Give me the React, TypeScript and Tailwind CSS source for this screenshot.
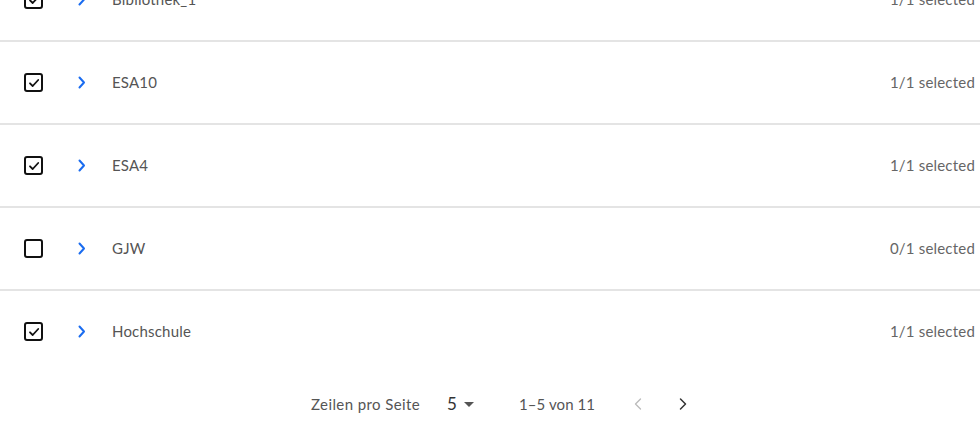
import { ChevronLeft, ChevronRight } from 'lucide-react';

const rows = [
    { name: "Bibliothek_1", checked: true, count: "1/1" },
    { name: "ESA10", checked: true, count: "1/1" },
    { name: "ESA4", checked: true, count: "1/1" },
    { name: "GJW", checked: false, count: "0/1" },
    { name: "Hochschule", checked: true, count: "1/1" },
];

function Checkbox({ checked }: { checked: boolean }) {
    return (
        <span className="w-[19px] h-[19px] border-2 border-[#111] rounded-[3px] flex items-center justify-center">
            {checked && (
                <svg width="12" height="12" viewBox="0 0 12 12" fill="none">
                    <path d="M2 6.3 L4.7 9 L10.2 3" stroke="#111" strokeWidth="1.8" strokeLinecap="round" strokeLinejoin="round" />
                </svg>
            )}
        </span>
    );
}

export default function App() {
    return (
        <div className="w-[980px] h-[428px] bg-white overflow-hidden font-['Lato',sans-serif]">
            <div className="-mt-[41px]">
                {rows.map((row, idx) => (
                    <div key={row.name}>
                        {idx > 0 && <div className="h-[2px] bg-[#e4e4e4]" />}
                        <div className="h-[81px] flex items-center pl-[24px] pr-[5px]">
                            <Checkbox checked={row.checked} />
                            <svg className="ml-[35px]" width="8" height="13" viewBox="0 0 8 13" fill="none">
                                <path d="M1.5 1.5 L6 6.5 L1.5 11.5" stroke="#1a6cf0" strokeWidth="2" strokeLinecap="round" strokeLinejoin="round" />
                            </svg>
                            <span className="ml-[26px] text-[15px] text-[#555] tracking-[0.2px]">{row.name}</span>
                            <span className="ml-auto text-[15px] text-[#666] tracking-[0.2px]">{row.count} selected</span>
                        </div>
                    </div>
                ))}
            </div>
            <div className="flex items-center h-[64px] pl-[311px] text-[15px] text-[#555]">
                <span className="tracking-[0.4px]">Zeilen pro Seite</span>
                <span className="ml-[27px] text-[17px] text-[#333]">5</span>
                <svg className="ml-[7px]" width="10" height="5" viewBox="0 0 10 5">
                    <path d="M0 0 L10 0 L5 5 Z" fill="#555" />
                </svg>
                <span className="ml-[45px] tracking-[0.1px]">1–5 von 11</span>
                <ChevronLeft className="ml-[33px] text-[#bbb]" size={20} strokeWidth={1.6} />
                <ChevronRight className="ml-[25px] text-[#333]" size={20} strokeWidth={1.8} />
            </div>
        </div>
    );
}
